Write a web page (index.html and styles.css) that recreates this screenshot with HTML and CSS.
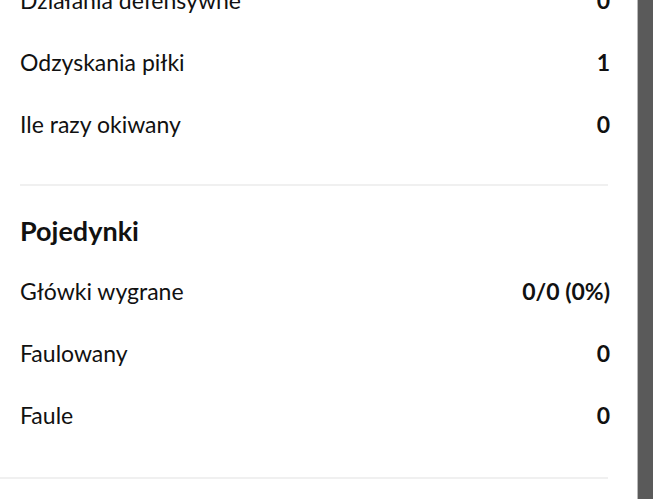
FILE: index.html
```html
<!DOCTYPE html>
<html lang="pl">
<head>
    <meta charset="UTF-8">
    <meta name="viewport" content="width=device-width, initial-scale=1.0">
    <title>Statystyki zawodnika</title>
    <link rel="stylesheet" href="styles.css">
</head>
<body>
    <div class="page">
        <div class="content">
            <div class="stats-section first">
                <div class="stat-row"><span>Działania defensywne</span><span class="value">0</span></div>
                <div class="stat-row"><span>Odzyskania piłki</span><span class="value">1</span></div>
                <div class="stat-row"><span>Ile razy okiwany</span><span class="value">0</span></div>
            </div>
            <div class="divider"></div>
            <div class="stats-section">
                <h2>Pojedynki</h2>
                <div class="stat-row"><span>Główki wygrane</span><span class="value">0/0 (0%)</span></div>
                <div class="stat-row"><span>Faulowany</span><span class="value">0</span></div>
                <div class="stat-row"><span>Faule</span><span class="value">0</span></div>
            </div>
            <div class="divider full"></div>
        </div>
        <div class="scrollbar"></div>
    </div>
</body>
</html>
```

FILE: styles.css
```css
html, body {
    margin: 0;
    height: 100%;
    overflow: hidden;
}

body {
    font-family: Lato, "Noto Sans", sans-serif;
    background-color: #fff;
    color: #111;
}

.page {
    display: flex;
    height: 499px;
}

.content {
    flex: 1;
    overflow: hidden;
}

.stats-section {
    padding: 14px 26px 29px 20px;
}

    .stats-section.first {
        margin-top: -45px;
    }

    .stats-section h2 {
        margin: 0;
        height: 60px;
        line-height: 62px;
        font-size: 27px;
        font-weight: 700;
    }

.stat-row {
    display: flex;
    justify-content: space-between;
    align-items: center;
    height: 62px;
    font-size: 23px;
}

    .stat-row .value {
        font-weight: 700;
    }

    .stat-row:last-child {
        margin-bottom: 2px;
    }

.first .stat-row:last-child {
    margin-bottom: 0;
}

.divider {
    height: 2px;
    background-color: #f0f0f0;
    margin: 0 28px 0 20px;
}

    .divider.full {
        margin-left: 0;
    }

.scrollbar {
    width: 15px;
    border-left: 1px solid #b9b9b9;
    margin-left: 1px;
    background-color: #5a5a5a;
}
```
